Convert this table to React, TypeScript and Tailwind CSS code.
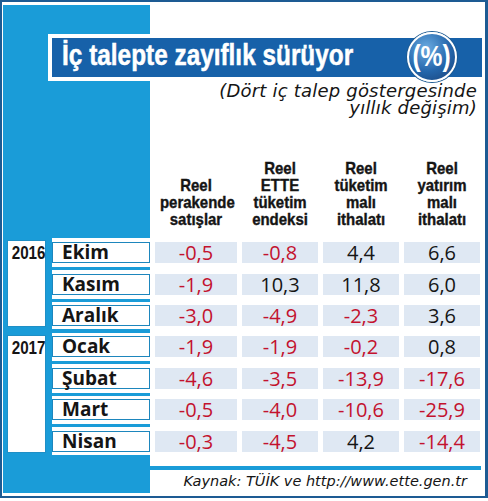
import { Fragment } from "react";

const headers = [
  ["Reel", "perakende", "satışlar"],
  ["Reel", "ETTE", "tüketim", "endeksi"],
  ["Reel", "tüketim", "malı", "ithalatı"],
  ["Reel", "yatırım", "malı", "ithalatı"],
];

type Month = { name: string; values: string[] };

const groups: { year: string; top: string; bottom: string; months: Month[] }[] = [
  {
    year: "2016",
    top: "pt-[4px]",
    bottom: "pb-[3px]",
    months: [
      { name: "Ekim", values: ["-0,5", "-0,8", "4,4", "6,6"] },
      { name: "Kasım", values: ["-1,9", "10,3", "11,8", "6,0"] },
      { name: "Aralık", values: ["-3,0", "-4,9", "-2,3", "3,6"] },
    ],
  },
  {
    year: "2017",
    top: "pt-[3px]",
    bottom: "pb-[3.5px]",
    months: [
      { name: "Ocak", values: ["-1,9", "-1,9", "-0,2", "0,8"] },
      { name: "Şubat", values: ["-4,6", "-3,5", "-13,9", "-17,6"] },
      { name: "Mart", values: ["-0,5", "-4,0", "-10,6", "-25,9"] },
      { name: "Nisan", values: ["-0,3", "-4,5", "4,2", "-14,4"] },
    ],
  },
];

const cols = "grid grid-cols-[82px_76px_76px_76px] gap-x-[5px] pl-[5px]";
const narrow = "font-['Liberation_Sans',Arial,sans-serif] font-bold";
const oblique = "font-['DejaVu_Sans',sans-serif] italic";

const YearGroup = ({ year, top, bottom, months }: (typeof groups)[number]) => {
  return (
    <div className="flex">
      {/* left: year + month names on the blue strip */}
      <div className="flex w-[147px] shrink-0 gap-[6px] pl-[4px]">
        <div className="my-[2px] w-[39px] border border-[#1f8fc6] bg-white pt-[2px] text-center">
          <div className={`${narrow} scale-x-[0.8] text-[19px] leading-[19px] text-[#151515]`}>{year}</div>
        </div>
        <div className={`flex w-[98px] flex-col bg-white ${top} ${bottom}`}>
          {months.map((m, i) => (
            <Fragment key={m.name}>
              {i > 0 && (
                <div className="h-[10.5px] pt-[4px]">
                  <div className="h-[3px] bg-[#1a9cd8]" />
                </div>
              )}
              <div className="h-[21px] border border-[#1d86bd] pl-[9px] font-['Open_Sans',sans-serif] text-[19px] font-bold leading-[19px] text-[#151515]">
                {m.name}
              </div>
            </Fragment>
          ))}
        </div>
      </div>

      {/* right: values */}
      <div className={`flex flex-1 flex-col ${top} ${bottom}`}>
        {months.map((m, i) => (
          <Fragment key={m.name}>
            {i > 0 && <div className="h-[10.5px]" />}
            <div className={`${cols} h-[21px]`}>
              {m.values.map((v, j) => (
                <div
                  key={j}
                  className={`bg-[#dfe8f3] text-center font-['Open_Sans',sans-serif] text-[20px] leading-[21px] ${
                    v.startsWith("-") ? "text-[#c3122e]" : "text-[#151515]"
                  }`}
                >
                  {v}
                </div>
              ))}
            </div>
          </Fragment>
        ))}
      </div>
    </div>
  );
};

const App = () => {
  return (
    <div className="h-[501px] w-[488px] bg-white">
      <div className="h-[498px] w-[488px] border-2 border-r-[3px] border-[#1d5b93] bg-white pt-[3px] pr-[3px] pb-[3px] pl-[1px]">
        <div className="flex h-full flex-col bg-[linear-gradient(to_right,#1a9cd8_147px,#ffffff_147px)]">
          {/* title, subtitle, column headers */}
          <div className="flex h-[233px] flex-col">
            <div className="relative ml-[45px] mt-[29px] h-[47px] border-[4px] border-r-0 border-white bg-[#1761a9]">
              <div
                className={`${narrow} origin-left scale-x-[0.84] whitespace-nowrap pl-[12px] text-[29px] leading-[34px] text-white [-webkit-text-stroke:0.5px_#ffffff]`}
              >
                İç talepte zayıflık sürüyor
              </div>
              <div className="absolute left-[355px] top-[-6px] flex h-[50px] w-[50px] items-center justify-center rounded-full border-2 border-white bg-[radial-gradient(circle_at_38%_30%,#6aaae0,#2466ab_55%,#173f76)] shadow-[0_0_0_1px_#1d5b93]">
                <span className={`${narrow} scale-x-[0.85] pb-[2px] text-[29px] leading-none text-white`}>(%)</span>
              </div>
            </div>
            <div className={`${oblique} mt-[1px] pr-[5px] text-right text-[18px] leading-[17px] tracking-[0.2px] text-[#151515]`}>
              (Dört iç talep göstergesinde
              <br />
              yıllık değişim)
            </div>
            <div className={`${cols} ml-[147px] mt-auto items-end pb-[10px]`}>
              {headers.map((h, i) => (
                <div
                  key={i}
                  className={`${narrow} scale-x-[0.88] text-center text-[17px] leading-[17px] text-[#151515] [-webkit-text-stroke:0.4px_#151515]`}
                >
                  {h.map((line) => (
                    <div key={line}>{line}</div>
                  ))}
                </div>
              ))}
            </div>
          </div>

          <YearGroup {...groups[0]} />
          <div className="h-[4px]" />
          <YearGroup {...groups[1]} />

          {/* source line */}
          <div className="ml-[147px] flex h-[38px] flex-col pt-[11px]">
            <div className="mr-[1px] h-[4px] bg-[#1a9cd8]" />
            <div className={`${oblique} pr-[15px] text-right text-[14.5px] leading-[23px] text-[#151515]`}>
              Kaynak: TÜİK ve http://www.ette.gen.tr
            </div>
          </div>
        </div>
      </div>
    </div>
  );
};

export default App;
